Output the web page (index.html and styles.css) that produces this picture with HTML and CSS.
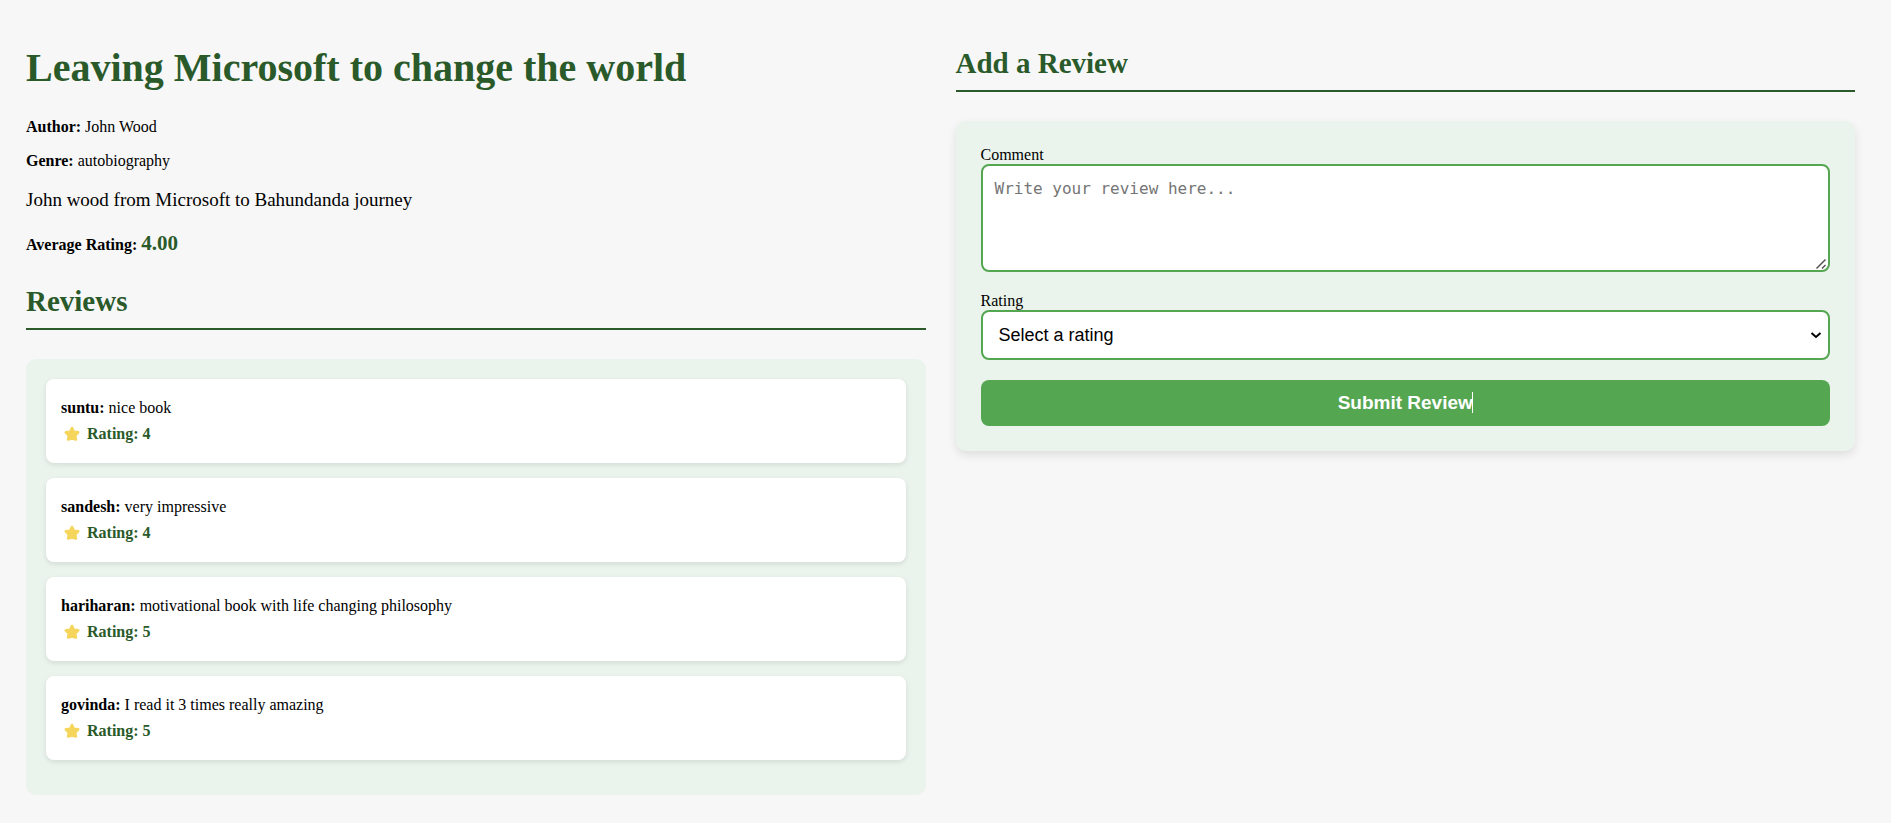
FILE: index.html
```html
<!DOCTYPE html>
<html lang="en">
<head>
<meta charset="utf-8">
<title>Leaving Microsoft to change the world</title>
<link rel="stylesheet" href="styles.css">
</head>
<body>
<svg class="sprite" aria-hidden="true">
  <symbol id="star" viewBox="0 0 16 16">
    <path d="M8 2 L9.8 5.9 L14.2 6.4 L11.1 9.6 L11.9 13.5 L8 12.4 L4.1 13.5 L4.9 9.6 L1.8 6.4 L6.2 5.9 Z" fill="#f6d55c" stroke="#f6d55c" stroke-width="2.6" stroke-linejoin="round"/>
  </symbol>
</svg>
<main class="page">
  <section class="book">
    <h1 class="book-title">Leaving Microsoft to change the world</h1>
    <p class="meta"><strong>Author:</strong> John Wood</p>
    <p class="meta"><strong>Genre:</strong> autobiography</p>
    <p class="description">John wood from Microsoft to Bahundanda journey</p>
    <p class="average"><strong>Average Rating:</strong> <span class="average-value">4.00</span></p>
    <h2 class="section-title">Reviews</h2>
    <ul class="reviews">
      <li class="review">
        <p class="review-text"><strong>suntu:</strong> nice book</p>
        <p class="review-rating"><svg class="star"><use href="#star"/></svg>Rating: 4</p>
      </li>
      <li class="review">
        <p class="review-text"><strong>sandesh:</strong> very impressive</p>
        <p class="review-rating"><svg class="star"><use href="#star"/></svg>Rating: 4</p>
      </li>
      <li class="review">
        <p class="review-text"><strong>hariharan:</strong> motivational book with life changing philosophy</p>
        <p class="review-rating"><svg class="star"><use href="#star"/></svg>Rating: 5</p>
      </li>
      <li class="review">
        <p class="review-text"><strong>govinda:</strong> I read it 3 times really amazing</p>
        <p class="review-rating"><svg class="star"><use href="#star"/></svg>Rating: 5</p>
      </li>
    </ul>
  </section>
  <section class="add-review">
    <h2 class="section-title">Add a Review</h2>
    <form class="form">
      <div class="field">
        <label for="comment">Comment</label>
        <textarea class="control comment" id="comment" placeholder="Write your review here..."></textarea>
        <svg class="grip" viewBox="0 0 12 12" aria-hidden="true"><path d="M1.5 10.5 L10.5 1.5 M7 10.5 L10.5 7" fill="none" stroke="#555" stroke-width="1.5"/></svg>
      </div>
      <div class="field">
        <label for="rating">Rating</label>
        <select class="control rating" id="rating">
          <option>Select a rating</option>
          <option>1</option>
          <option>2</option>
          <option>3</option>
          <option>4</option>
          <option>5</option>
        </select>
        <svg class="chevron" viewBox="0 0 12 12" aria-hidden="true"><path d="M1.5 4 L6 8 L10.5 4" fill="none" stroke="#000" stroke-width="2"/></svg>
      </div>
      <button class="submit" type="button"><span class="submit-label">Submit Review</span></button>
    </form>
  </section>
</main>
</body>
</html>
```
FILE: styles.css
```css
* {
  box-sizing: border-box;
}

body {
  margin: 0;
  background: #f7f7f7;
  color: #000;
  font: 16px/18px "Liberation Serif", "Times New Roman", serif;
}

.sprite {
  display: none;
}

.page {
  display: grid;
  grid-template-columns: 1fr 1fr;
  align-items: start;
  gap: 30px;
  padding: 45px 36px 28px 26px;
}

.book-title {
  margin: 0 0 27px;
  color: #2a5a2a;
  font-size: 40px;
  line-height: 46px;
}

.meta {
  margin: 0 0 16px;
}

.description {
  margin: 19px 0 20px;
  font-size: 19px;
  line-height: 22px;
}

.average {
  margin: 0 0 28px;
  line-height: 24px;
}

.average-value {
  color: #2a5a2a;
  font-size: 21px;
  font-weight: bold;
}

.section-title {
  margin: 0 0 29px;
  padding-bottom: 10px;
  border-bottom: 2px solid #2a5a2a;
  color: #2a5a2a;
  font-size: 29px;
  line-height: 33px;
}

.reviews {
  display: grid;
  gap: 15px;
  margin: 0;
  padding: 20px 20px 35px;
  border-radius: 10px;
  background: #eaf4ec;
  list-style: none;
}

.review {
  padding: 20px 15px;
  border-radius: 8px;
  background: #fff;
  box-shadow: 0 2px 5px rgba(0, 0, 0, 0.1);
}

.review-text {
  margin: 0 0 8px;
}

.review-rating {
  display: flex;
  align-items: center;
  gap: 7px;
  margin: 0;
  padding-left: 3px;
  color: #2a5a2a;
  font-weight: bold;
}

.star {
  width: 16px;
  height: 16px;
}

.add-review {
  padding-top: 2px;
}

.form {
  display: grid;
  gap: 20px;
  padding: 25px;
  border-radius: 10px;
  background: #eaf4ec;
  box-shadow: 0 4px 10px rgba(0, 0, 0, 0.1);
}

.field {
  display: grid;
  position: relative;
}

.control {
  width: 100%;
  border: 2px solid #54a651;
  border-radius: 8px;
  background: #fff;
  color: #000;
}

.comment {
  display: block;
  height: 108px;
  padding: 12px;
  font: 16px/21px "DejaVu Sans Mono", monospace;
  resize: vertical;
}

.comment::placeholder {
  color: #757575;
}

.comment::-webkit-resizer {
  background: transparent;
}

.grip,
.chevron {
  position: absolute;
  width: 12px;
  height: 12px;
  pointer-events: none;
}

.grip {
  right: 3px;
  bottom: 2px;
}

.chevron {
  right: 8px;
  bottom: 19px;
}

.rating {
  height: 50px;
  padding: 12px 16px;
  font: 18px "Liberation Sans", Arial, sans-serif;
  appearance: none;
}

.submit {
  padding: 12px;
  border: 0;
  border-radius: 8px;
  background: #54a651;
  color: #fff;
  font: bold 19px/22px "Liberation Sans", Arial, sans-serif;
}

.submit-label {
  position: relative;
}

.submit-label::after {
  position: absolute;
  top: 0;
  right: 0;
  width: 1px;
  height: 100%;
  background: #fff;
  content: "";
}
```
